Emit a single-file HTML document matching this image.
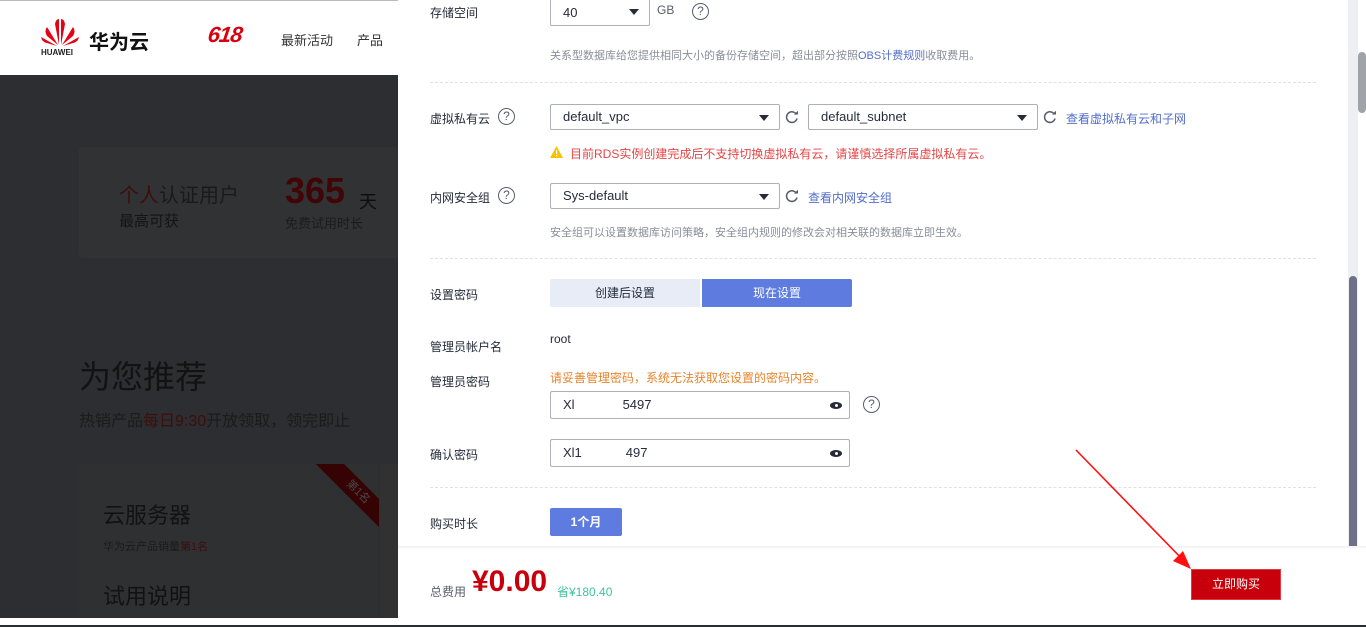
<!DOCTYPE html>
<html><head><meta charset="utf-8"><style>
*{margin:0;padding:0;box-sizing:border-box}
body{width:1366px;height:627px;overflow:hidden;position:relative;background:#fff;font-family:"Liberation Sans","Noto Sans CJK SC",sans-serif;font-size:12px;color:#252b3a}
.a{position:absolute;white-space:nowrap}
.lbl{position:absolute;left:430px;font-size:12px;color:#252b3a}
.sel{position:absolute;border:1px solid #adb0b8;border-radius:2px;background:#fff;height:26px;line-height:24px;padding-left:12px;font-size:13px;color:#252b3a}
.sel:after{content:"";position:absolute;right:10px;top:10px;border-left:5px solid transparent;border-right:5px solid transparent;border-top:6px solid #252b3a}
.q{position:absolute;width:17px;height:17px;border:1.3px solid #575d6c;border-radius:50%;font-size:12px;line-height:15px;text-align:center;color:#575d6c}
.hint{position:absolute;left:550px;font-size:11px;color:#8a8e99}
.dash{position:absolute;left:430px;width:886px;border-top:1px dashed #dfe1e6}
.ref{position:absolute}
.lk{color:#526ecc}
.inp{position:absolute;left:550px;width:300px;height:28px;border:1px solid #adb0b8;border-radius:2px;line-height:26px;padding-left:12px;font-size:13px;color:#252b3a}
.eye{position:absolute;right:7px;top:10px;width:12px;height:7px;background:#252b3a;border-radius:50%}
.eye:after{content:"";position:absolute;left:4.5px;top:2px;width:3px;height:3px;background:#fff;border-radius:50%}
</style></head><body>
<div class="a" style="left:0;top:0;width:398px;height:75px;background:#fff"></div>
<div class="a" style="left:0;top:75px;width:398px;height:543px;background:#2d2e31"></div>
<div class="a" style="left:0;top:0;width:1366px;height:1px;background:#bbb"></div>
<svg class="a" style="left:40px;top:18px" width="40" height="28" viewBox="0 0 40 28">
<g fill="#e60012">
<path d="M19 27 L15 6 Q16 1 19 1Z"/><path d="M21 27 L25 6 Q24 1 21 1Z"/>
<path d="M18 27 L7 9 Q4 13 7 18Z"/><path d="M22 27 L33 9 Q36 13 33 18Z"/>
<path d="M17 28 L1 19 Q2 24 7 25Z"/><path d="M23 28 L39 19 Q38 24 33 25Z"/>
</g></svg>
<div class="a" style="left:41px;top:48px;font-size:8px;font-weight:bold;color:#222">HUAWEI</div>
<div class="a" style="left:89px;top:26px;font-size:20px;font-weight:bold;color:#111">华为云</div>
<div class="a" style="left:208px;top:22px;font-size:22px;font-weight:900;font-style:italic;color:#d7000f;letter-spacing:-1px;transform:skewX(-8deg)">618</div>
<div class="a" style="left:281px;top:30px;font-size:13px;color:#333">最新活动</div>
<div class="a" style="left:357px;top:30px;font-size:13px;color:#333">产品</div>
<div class="a" style="left:79px;top:147px;width:319px;height:111px;background:#313234;border-radius:3px"></div>
<div class="a" style="left:119px;top:179px;font-size:20px;color:#1a1a1a"><span style="color:#3e0d0e">个人</span>认证用户</div>
<div class="a" style="left:119px;top:210px;font-size:15px;color:#141414">最高可获</div>
<div class="a" style="left:285px;top:170px;font-size:36px;font-weight:bold;color:#420507">365</div>
<div class="a" style="left:359px;top:188px;font-size:18px;color:#0e0e0e">天</div>
<div class="a" style="left:285px;top:213px;font-size:13px;color:#1c1c1c">免费试用时长</div>
<div class="a" style="left:79px;top:352px;font-size:32px;color:#111213">为您推荐</div>
<div class="a" style="left:79px;top:407px;font-size:16px;color:#1a1b1c">热销产品<span style="color:#3e0d0e">每日9:30</span>开放领取，领完即止</div>
<div class="a" style="left:79px;top:464px;width:300px;height:154px;background:#2f3032"></div>
<div class="a" style="left:380px;top:464px;width:18px;height:154px;background:#313131"></div>
<div class="a" style="left:313px;top:464px;width:66px;height:66px;overflow:hidden"><div style="position:absolute;left:-10px;top:18px;width:110px;height:20px;background:#360304;transform:rotate(45deg);color:#4a4a4a;font-size:11px;text-align:center;line-height:20px">第1名</div></div>
<div class="a" style="left:103px;top:498px;font-size:22px;color:#111213">云服务器</div>
<div class="a" style="left:103px;top:538px;font-size:11px;color:#1a1b1c">华为云产品销量<span style="color:#3e0d0e">第1名</span></div>
<div class="a" style="left:103px;top:579px;font-size:22px;color:#111213">试用说明</div>

<div class="a" style="left:398px;top:0;width:968px;height:627px;background:#fff"></div>
<div class="a" style="left:1348px;top:0;width:10px;height:547px;background:#eeeff3"></div>
<div class="a" style="left:1358px;top:52px;width:8px;height:61px;background:#a0a3a8;border-radius:4px"></div>
<div class="a" style="left:1349px;top:276px;width:8px;height:271px;background:#6d7188;border-radius:4px 4px 0 0"></div>

<div class="lbl" style="top:4px">存储空间</div>
<div class="sel" style="left:550px;top:-2px;width:100px;height:28px;line-height:28px">40</div>
<div class="a" style="left:657px;top:3px;font-size:12px;color:#575d6c">GB</div>
<div class="q" style="left:692px;top:3px">?</div>
<div class="hint" style="top:47px">关系型数据库给您提供相同大小的备份存储空间，超出部分按照<span class="lk">OBS计费规则</span>收取费用。</div>
<div class="dash" style="top:82px"></div>

<svg width="0" height="0" style="position:absolute"><defs><symbol id="r" viewBox="0 0 14 14"><path d="M11.5 4.5 A5.3 5.3 0 1 0 12 8.5" fill="none" stroke="#575d6c" stroke-width="1.5"/><path d="M9 4.5 L13 4.5 L13 0.8Z" fill="#575d6c"/></symbol></defs></svg>

<div class="lbl" style="top:110px">虚拟私有云</div>
<div class="q" style="left:498px;top:108px">?</div>
<div class="sel" style="left:550px;top:104px;width:230px">default_vpc</div>
<svg class="ref" style="left:785px;top:110px" width="14" height="14"><use href="#r"/></svg>
<div class="sel" style="left:808px;top:104px;width:230px">default_subnet</div>
<svg class="ref" style="left:1043px;top:110px" width="14" height="14"><use href="#r"/></svg>
<div class="a lk" style="left:1066px;top:110px;font-size:12px">查看虚拟私有云和子网</div>
<svg class="a" style="left:550px;top:146px" width="13" height="12"><path d="M6.5 0L13 12H0Z" fill="#f7c200"/><rect x="6" y="4" width="1.2" height="4" fill="#fff"/><rect x="6" y="9" width="1.2" height="1.2" fill="#fff"/></svg>
<div class="a" style="left:570px;top:145px;font-size:12px;color:#e54545">目前RDS实例创建完成后不支持切换虚拟私有云，请谨慎选择所属虚拟私有云。</div>

<div class="lbl" style="top:189px">内网安全组</div>
<div class="q" style="left:498px;top:187px">?</div>
<div class="sel" style="left:550px;top:183px;width:230px">Sys-default</div>
<svg class="ref" style="left:785px;top:189px" width="14" height="14"><use href="#r"/></svg>
<div class="a lk" style="left:808px;top:189px;font-size:12px">查看内网安全组</div>
<div class="hint" style="top:224px">安全组可以设置数据库访问策略，安全组内规则的修改会对相关联的数据库立即生效。</div>
<div class="dash" style="top:258px"></div>

<div class="lbl" style="top:286px">设置密码</div>
<div class="a" style="left:550px;top:279px;width:150px;height:28px;background:#e8ecf7;border-radius:2px 0 0 2px;text-align:center;line-height:28px;font-size:12px;color:#252b3a">创建后设置</div>
<div class="a" style="left:702px;top:279px;width:150px;height:28px;background:#5e7ce0;border-radius:0 2px 2px 0;text-align:center;line-height:28px;font-size:12px;color:#fff">现在设置</div>

<div class="lbl" style="top:338px">管理员帐户名</div>
<div class="a" style="left:550px;top:332px;font-size:12px">root</div>
<div class="lbl" style="top:373px">管理员密码</div>
<div class="a" style="left:550px;top:369px;font-size:12px;color:#e8842c">请妥善管理密码，系统无法获取您设置的密码内容。</div>
<div class="inp" style="top:391px">Xl<span style="display:inline-block;width:48px"></span>5497<i class="eye"></i></div>
<div class="q" style="left:863px;top:396px">?</div>
<div class="lbl" style="top:446px">确认密码</div>
<div class="inp" style="top:439px">Xl1<span style="display:inline-block;width:44px"></span>497<i class="eye"></i></div>
<div class="dash" style="top:487px"></div>

<div class="lbl" style="top:515px">购买时长</div>
<div class="a" style="left:550px;top:508px;width:72px;height:28px;background:#5e7ce0;border-radius:2px;text-align:center;line-height:28px;font-size:12px;color:#fff;font-weight:bold">1个月</div>

<div class="a" style="left:398px;top:546px;width:968px;height:3px;background:linear-gradient(#eee,#fff)"></div>
<div class="a" style="left:430px;top:583px;font-size:12px;color:#575d6c">总费用</div>
<div class="a" style="left:472px;top:565px;font-size:30px;font-weight:bold;color:#c7000b">¥0.00</div>
<div class="a" style="left:557px;top:583px;font-size:12px;color:#3fc39d">省¥180.40</div>
<div class="a" style="left:1191px;top:569px;width:90px;height:31px;background:#c7000b;border:1px solid #e03a3f;text-align:center;line-height:29px;font-size:12px;color:#fff">立即购买</div>
<svg class="a" style="left:1070px;top:445px" width="125" height="130"><line x1="6" y1="5" x2="116" y2="118" stroke="#ff1010" stroke-width="1.6"/><path d="M121 124 L103 116 L113 106Z" fill="#ff1010"/></svg>
<div class="a" style="left:0;top:625px;width:1366px;height:2px;background:#2a2d30"></div>
</body></html>
